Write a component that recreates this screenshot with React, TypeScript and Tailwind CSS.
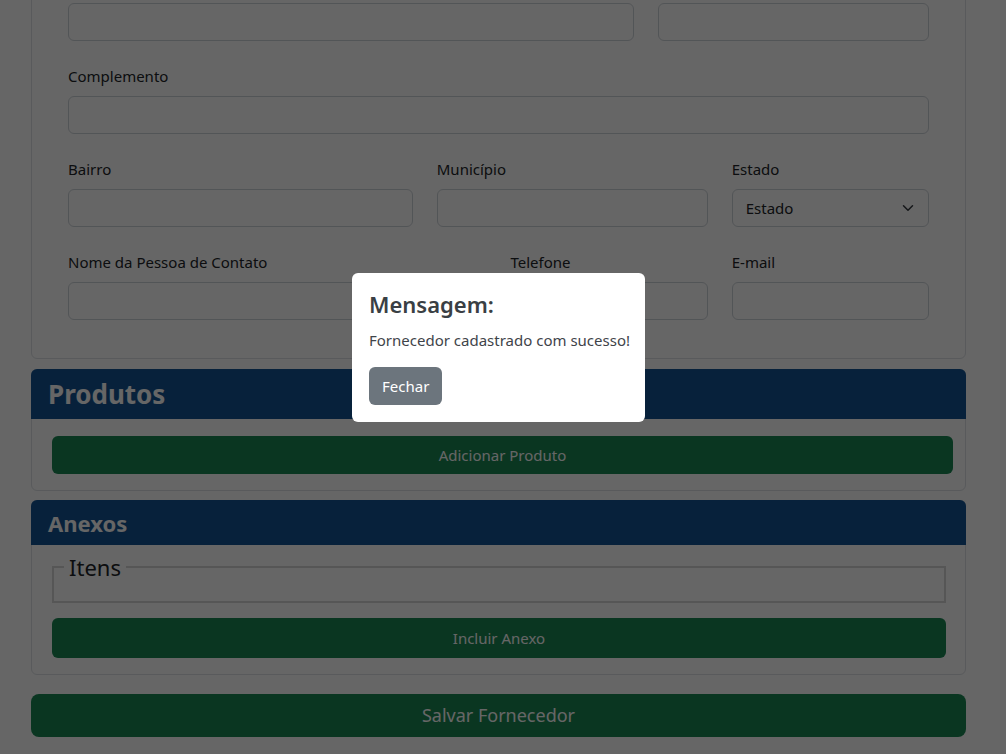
import React from "react";

const font = { fontFamily: '"Noto Sans", "Open Sans", Arial, sans-serif' };

function Input() {
  return <div className="h-[38px] rounded-[6px] border border-[#ced4da] bg-white" />;
}

function Field({ label, span, select }: { label: string; span: string; select?: boolean }) {
  return (
    <div className={span}>
      <div className="h-[24px] mb-[8px] text-[15px] leading-[24px] text-[#212529]">{label}</div>
      {select ? (
        <div className="h-[38px] rounded-[6px] border border-[#ced4da] bg-white flex items-center justify-between pl-[13px] pr-[12px] text-[15px] text-[#212529]">
          <span>Estado</span>
          <svg width="16" height="12" viewBox="0 0 16 16" fill="none" stroke="#343a40" strokeWidth="2" strokeLinecap="round" strokeLinejoin="round">
            <path d="m2 5 6 6 6-6" />
          </svg>
        </div>
      ) : (
        <Input />
      )}
    </div>
  );
}

export default function App() {
  return (
    <div className="relative h-[754px] overflow-hidden bg-white" style={font}>
      <div className="ml-[31px] w-[935px]">
        {/* Dados do fornecedor */}
        <div className="-mt-[21px] border border-[#dee2e6] rounded-b-[6px] pt-[23px] px-[36px] pb-[38px]">
          <div className="grid grid-cols-12 gap-x-6 mb-[23px]">
            <div className="col-span-8"><Input /></div>
            <div className="col-span-4"><Input /></div>
          </div>
          <div className="grid grid-cols-12 gap-x-6 mb-[23px]">
            <Field label="Complemento" span="col-span-12" />
          </div>
          <div className="grid grid-cols-12 gap-x-6 mb-[23px]">
            <Field label="Bairro" span="col-span-5" />
            <Field label="Município" span="col-span-4" />
            <Field label="Estado" span="col-span-3" select />
          </div>
          <div className="grid grid-cols-12 gap-x-6">
            <Field label="Nome da Pessoa de Contato" span="col-span-6" />
            <Field label="Telefone" span="col-span-3" />
            <Field label="E-mail" span="col-span-3" />
          </div>
        </div>

        {/* Produtos */}
        <div className="mt-[10px] border border-[#dee2e6] rounded-[6px]">
          <div className="h-[50px] -mx-px -mt-px rounded-t-[6px] bg-[#135494] px-[17px] flex items-center">
            <h2 className="text-[26px] font-bold leading-none text-white">Produtos</h2>
          </div>
          <div className="pt-[17px] pb-[16px] pl-[20px] pr-[12px]">
            <button className="w-full h-[38px] rounded-[6px] bg-[#198754] text-white text-[15px]">Adicionar Produto</button>
          </div>
        </div>

        {/* Anexos */}
        <div className="mt-[9px] border border-[#dee2e6] rounded-[6px]">
          <div className="h-[45px] -mx-px -mt-px rounded-t-[6px] bg-[#135494] px-[17px] flex items-center">
            <h3 className="text-[22px] font-bold leading-none text-white">Anexos</h3>
          </div>
          <div className="pt-[8px] pb-[16px] pl-[20px] pr-[19px]">
            <fieldset className="border-2 border-solid border-[#d6d6d6] px-[10px] pb-[20px]">
              <legend className="px-[5px] text-[22px] leading-[28px] text-[#212529]">Itens</legend>
            </fieldset>
            <button className="mt-[15px] w-full h-[40px] rounded-[6px] bg-[#198754] text-white text-[15px]">Incluir Anexo</button>
          </div>
        </div>

        <button className="mt-[19px] w-full h-[43px] rounded-[8px] bg-[#198754] text-white text-[18px]">Salvar Fornecedor</button>
      </div>

      {/* Overlay */}
      <div className="absolute inset-0 bg-black/60" />

      {/* Modal */}
      <div className="absolute left-[352px] top-[273px] w-[293px] rounded-[6px] bg-white pt-[17px] px-[17px] pb-[17px]">
        <h4 className="text-[22px] font-semibold leading-[29px] text-[#3a3f44] mb-[9px]">Mensagem:</h4>
        <p className="text-[15px] leading-[24px] text-[#3f444a] mb-[15px] whitespace-nowrap">Fornecedor cadastrado com sucesso!</p>
        <button className="h-[38px] px-[13px] rounded-[6px] bg-[#6c757d] text-white text-[15px]">Fechar</button>
      </div>
    </div>
  );
}
